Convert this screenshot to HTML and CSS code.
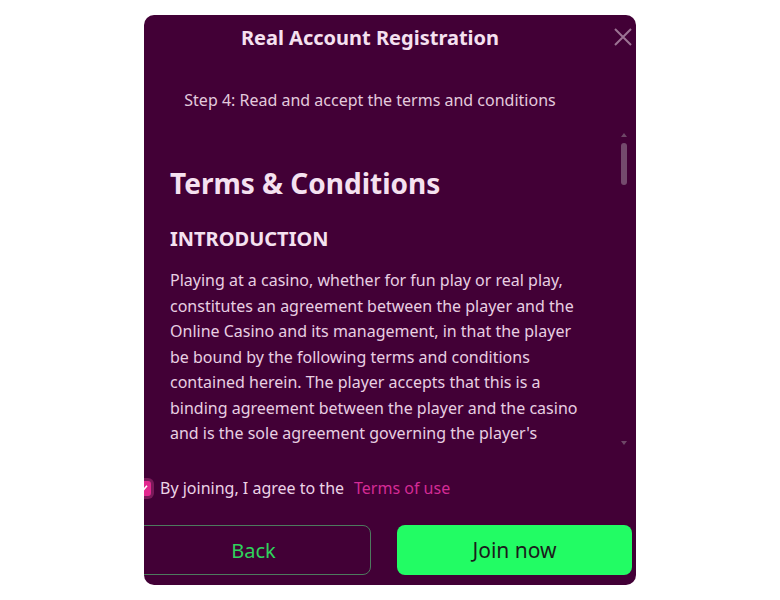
FILE: index.html
```html
<!DOCTYPE html>
<html lang="en">
<head>
<meta charset="utf-8">
<title>Real Account Registration</title>
<link rel="stylesheet" href="styles.css">
</head>
<body>
<div class="modal">
  <div class="modal-header">
    <h2 class="modal-title">Real Account Registration</h2>
    <button class="close-btn" aria-label="Close">
      <svg viewBox="0 0 18 18" width="18" height="18"><path d="M1 1 L17 17 M17 1 L1 17" stroke="currentColor" stroke-width="2" fill="none"/></svg>
    </button>
  </div>
  <p class="step">Step 4: Read and accept the terms and conditions</p>
  <div class="scroll-area">
    <div class="terms">
      <h1 class="terms-title">Terms &amp; Conditions</h1>
      <h3 class="terms-sub">INTRODUCTION</h3>
      <p class="terms-text">Playing at a casino, whether for fun play or real play, constitutes an agreement between the player and the Online Casino and its management, in that the player be bound by the following terms and conditions contained herein. The player accepts that this is a binding agreement between the player and the casino and is the sole agreement governing the player's</p>
    </div>
    <div class="scrollbar">
      <span class="arrow up"></span>
      <span class="thumb"></span>
      <span class="track"></span>
      <span class="arrow down"></span>
    </div>
  </div>
  <div class="footer">
    <label class="agree">
      <span class="checkbox"><svg viewBox="0 0 10 10" width="10" height="10"><path d="M2 5.2 L4.2 7.3 L8 2.8" stroke="#fff" stroke-width="1.6" fill="none"/></svg></span>
      <span class="agree-text">By joining, I agree to the</span>
      <a class="agree-link">Terms of use</a>
    </label>
    <div class="buttons">
      <button class="btn btn-back">Back</button>
      <button class="btn btn-join">Join now</button>
    </div>
  </div>
</div>
</body>
</html>
```

FILE: styles.css
```css
* { box-sizing: border-box; }
html, body { margin: 0; padding: 0; }
body {
  background: #ffffff;
  height: 100vh;
  display: flex;
  align-items: center;
  justify-content: center;
  font-family: "Noto Sans", "Open Sans", sans-serif;
}
.modal {
  width: 492px;
  height: 570px;
  background: #420036;
  border-radius: 10px;
  overflow: hidden;
  display: flex;
  flex-direction: column;
  color: #ecd3e6;
}
.modal-header {
  position: relative;
  height: 50px;
  padding: 9px 40px 0 0;
  text-align: center;
}
.modal-title {
  margin: 0;
  font-size: 20px;
  line-height: 28px;
  font-weight: 700;
  color: #f5e1f0;
}
.close-btn {
  position: absolute;
  right: 4px;
  top: 13px;
  background: none;
  border: 0;
  padding: 0;
  color: #9c7394;
  width: 18px;
  height: 18px;
}
.close-btn svg { display: block; }
.step {
  margin: 24px 40px 0 0;
  text-align: center;
  font-size: 16px;
  line-height: 22px;
  color: #e3cadd;
}
.scroll-area {
  margin-top: 19px;
  height: 320px;
  display: flex;
}
.terms {
  flex: 1;
  overflow: hidden;
  padding: 36px 30px 0 26px;
}
.terms-title {
  margin: 0;
  font-size: 28px;
  line-height: 34px;
  font-weight: 700;
  color: #f5e1f0;
}
.terms-sub {
  margin: 26px 0 0 0;
  font-size: 20px;
  line-height: 26px;
  font-weight: 700;
  color: #f5e1f0;
}
.terms-text {
  margin: 16px 0 0 0;
  font-size: 16px;
  line-height: 25.5px;
  color: #e8cfe2;
}
.scrollbar {
  width: 14px;
  margin-right: 5px;
  display: flex;
  flex-direction: column;
  align-items: center;
  padding-top: 3px;
  padding-bottom: 5px;
}
.arrow {
  width: 0;
  height: 0;
  border-left: 3px solid transparent;
  border-right: 3px solid transparent;
}
.arrow.up { border-bottom: 4px solid #6e4767; }
.arrow.down { border-top: 4px solid #6e4767; }
.thumb {
  margin-top: 6px;
  width: 6px;
  height: 42px;
  border-radius: 3px;
  background: #744a6d;
}
.track { flex: 1; }
.footer {
  margin-left: -8px;
  margin-right: 4px;
  padding-top: 26px;
}
.agree {
  display: flex;
  align-items: center;
  height: 24px;
  font-size: 16px;
  color: #ecd3e6;
}
.checkbox {
  width: 15px;
  height: 15px;
  border-radius: 3px;
  background: #e2288f;
  box-shadow: 0 0 0 3px #7a1a5a;
  display: flex;
  align-items: center;
  justify-content: center;
  margin-right: 9px;
}
.checkbox svg { display: block; }
.agree-link {
  margin-left: 10px;
  color: #d42b95;
}
.buttons {
  margin-top: 25px;
  display: grid;
  grid-template-columns: 1fr 1fr;
  gap: 26px;
}
.btn {
  height: 50px;
  border-radius: 8px;
  font-family: "Noto Sans", "Open Sans", sans-serif;
  font-size: 20px;
}
.btn-back {
  background: transparent;
  border: 1px solid #4d7a5e;
  color: #2fd35c;
}
.btn-join {
  background: #22fc64;
  border: 0;
  color: #1b1b1b;
  font-size: 21px;
}
```
